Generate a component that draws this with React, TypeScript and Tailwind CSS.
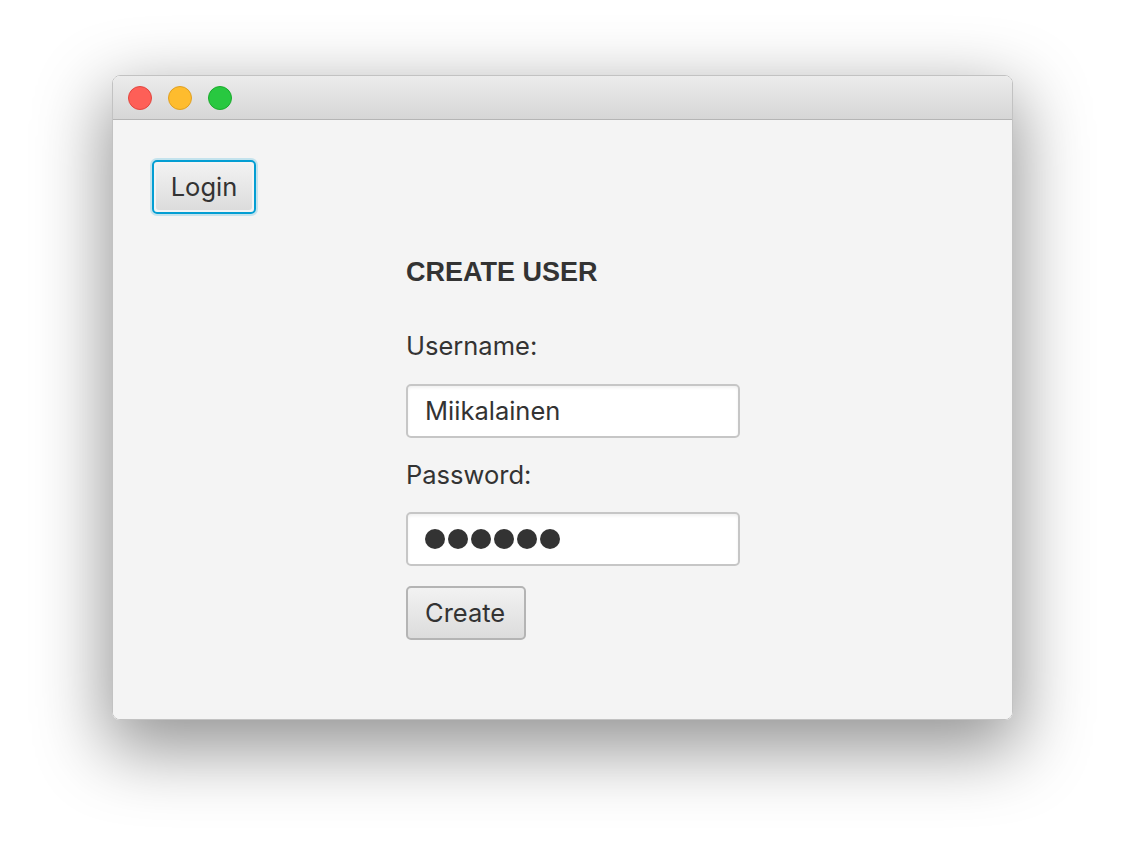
import React from "react";

const sans = { fontFamily: 'Inter, "Noto Sans", sans-serif' };

export default function App() {
  return (
    <div className="w-[1124px] h-[868px] bg-white pt-[75px] pl-[112px] overflow-hidden" style={sans}>
      <div className="w-[901px] h-[645px] rounded-[8px] flex flex-col overflow-hidden border border-[#c2c2c2] shadow-[0_24px_70px_6px_rgba(0,0,0,0.42)]">
        {/* Title bar */}
        <div className="h-[44px] shrink-0 bg-gradient-to-b from-[#ececec] to-[#d6d6d6] border-b border-[#b5b5b5] flex items-center pl-[15px] gap-[16px]">
          <div className="w-[24px] h-[24px] rounded-full bg-[#fe5f57] border border-[#e2463f]" />
          <div className="w-[24px] h-[24px] rounded-full bg-[#febc2e] border border-[#e0a022]" />
          <div className="w-[24px] h-[24px] rounded-full bg-[#28c840] border border-[#1aab2c]" />
        </div>
        {/* Content */}
        <div className="flex-1 bg-[#f4f4f4] pt-[40px] pl-[39px] text-[#333333]">
          <div className="w-[104px] h-[54px] rounded-[5px] border-2 border-[#039ed3] shadow-[0_0_0_2px_rgba(3,158,211,0.2)] p-[2px]">
            <div className="w-full h-full rounded-[3px] bg-gradient-to-b from-[#f2f2f2] to-[#dcdcdc] flex items-center justify-center text-[25.5px] leading-[30px]">
              Login
            </div>
          </div>
          <div className="ml-[254px] mt-[42px] flex flex-col items-start">
            <div className="text-[27px] leading-[32px] font-bold text-[#333333]" style={{ fontFamily: '"Liberation Sans", Arial, sans-serif' }}>
              CREATE USER
            </div>
            <div className="mt-[43px] text-[25.5px] leading-[30px]">Username:</div>
            <div className="mt-[23px] w-[334px] h-[54px] rounded-[5px] border-2 border-[#c6c6c6] bg-white shadow-[inset_0_2px_3px_rgba(0,0,0,0.06)] flex items-center pl-[17px] text-[25.5px] leading-[30px]">
              Miikalainen
            </div>
            <div className="mt-[22px] text-[25.5px] leading-[30px]">Password:</div>
            <div className="mt-[22px] w-[334px] h-[54px] rounded-[5px] border-2 border-[#c6c6c6] bg-white shadow-[inset_0_2px_3px_rgba(0,0,0,0.06)] flex items-center pl-[17px] gap-[3px]">
              {[0, 1, 2, 3, 4, 5].map((i) => (
                <span key={i} className="w-[20px] h-[20px] rounded-full bg-[#333333]" />
              ))}
            </div>
            <div className="mt-[20px] w-[120px] h-[54px] rounded-[5px] border-2 border-[#b4b4b4] bg-gradient-to-b from-[#f2f2f2] to-[#dcdcdc] flex items-center pl-[17px] text-[25.5px] leading-[30px]">
              Create
            </div>
          </div>
        </div>
      </div>
    </div>
  );
}
